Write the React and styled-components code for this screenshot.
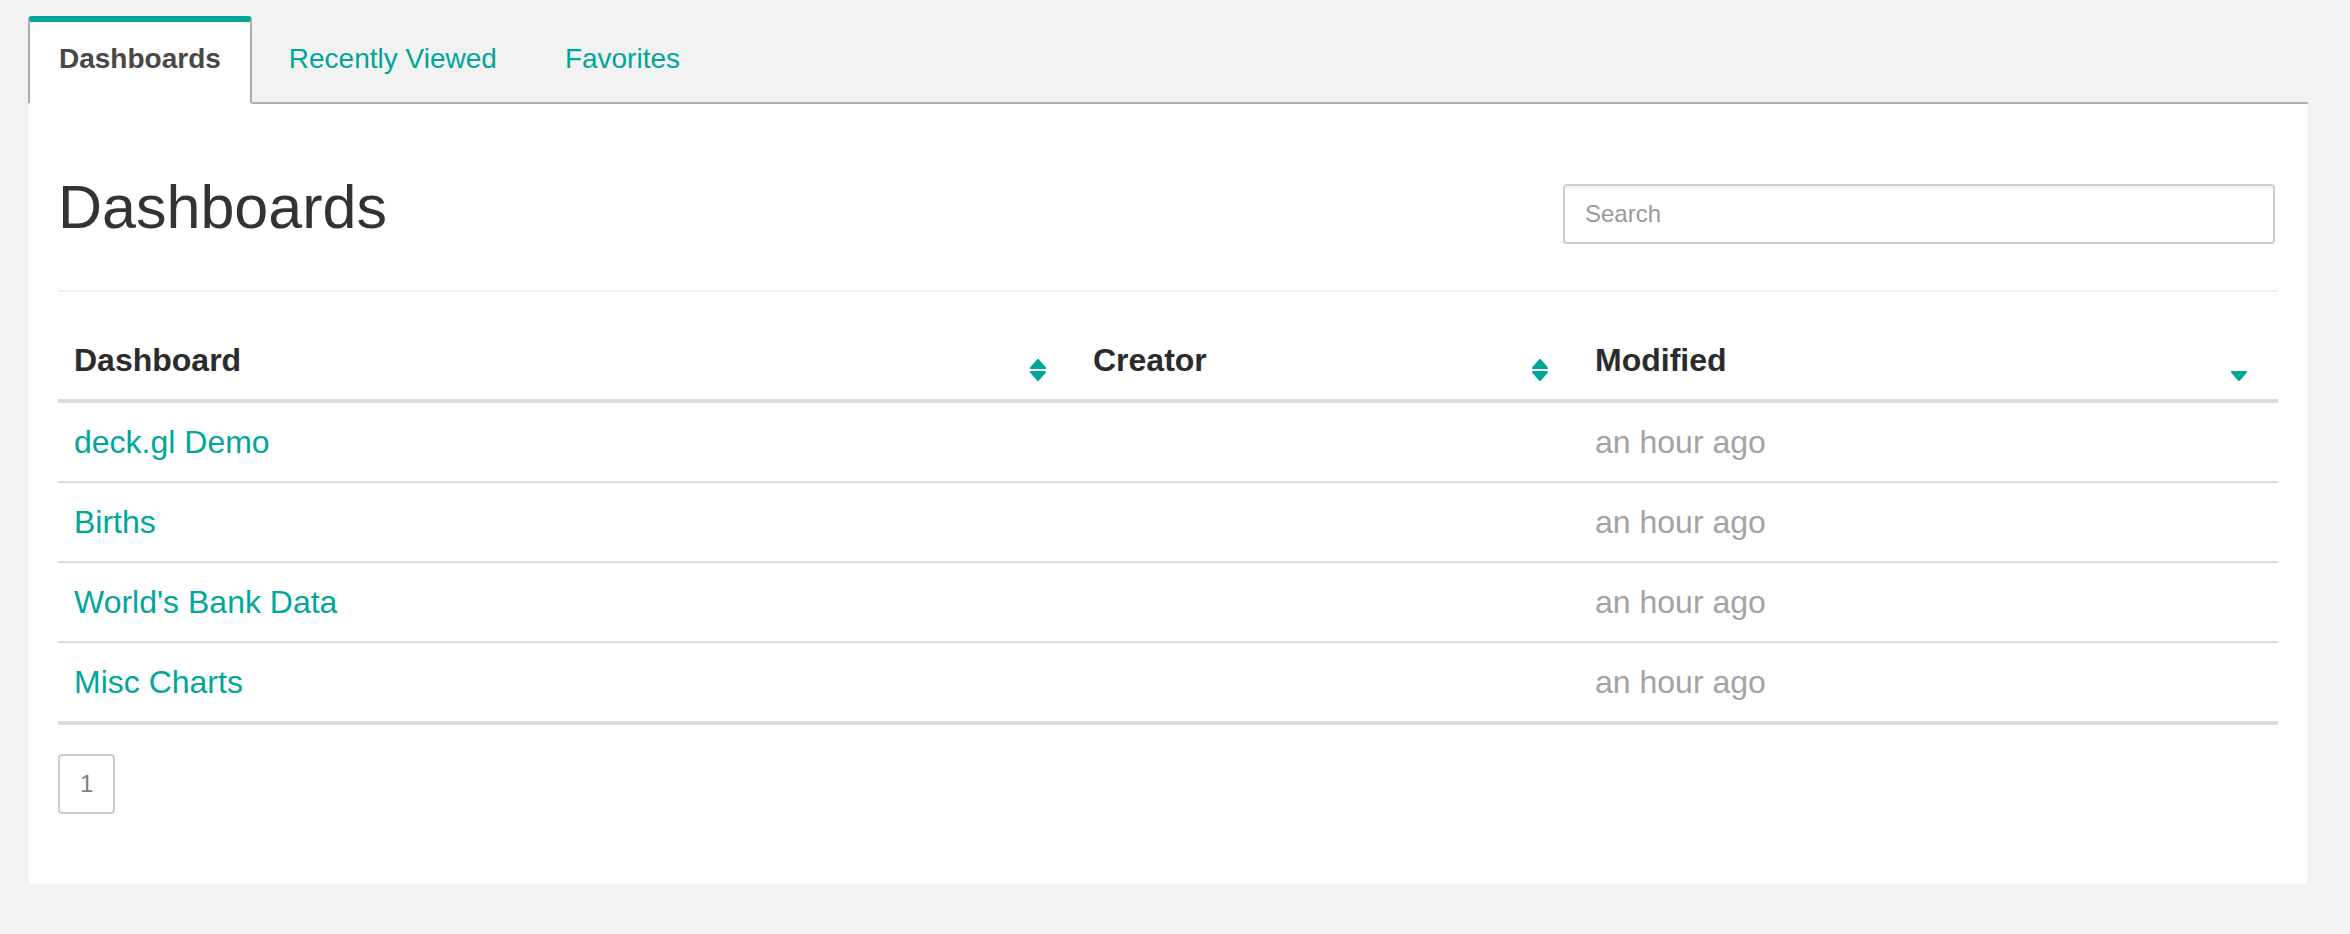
import React from 'react';
import styled, { createGlobalStyle } from 'styled-components';

const GlobalStyle = createGlobalStyle`
    html, body {
        margin: 0;
        padding: 0;
        background: #f2f2f2;
        font-family: "Liberation Sans", Arial, sans-serif;
        color: #333;
    }
`;

const Page = styled.div`
    padding: 16px 42px 0 28px;
`;

const TabList = styled.ul`
    display: flex;
    list-style: none;
    margin: 0;
    padding: 0;
    border-bottom: 2px solid #b0b0b0;
`;

const Tab = styled.li`
    margin: 0 6px -2px 0;
    padding: 17px 29px 23px;
    line-height: 40px;
    font-size: 28px;
    font-weight: ${(p) => (p.active ? 'bold' : 'normal')};
    color: ${(p) => (p.active ? '#484848' : '#00a699')};
    background: ${(p) => (p.active ? '#fff' : 'transparent')};
    border: 2px solid ${(p) => (p.active ? '#aaa' : 'transparent')};
    border-top: 6px solid ${(p) => (p.active ? '#00a699' : 'transparent')};
    border-bottom-color: ${(p) => (p.active ? '#fff' : 'transparent')};
    border-radius: 4px 4px 0 0;
    cursor: pointer;
`;

const Panel = styled.div`
    background: #fff;
    padding: 30px;
    border-radius: 0 0 4px 4px;
    box-shadow: 0 1px 3px rgba(0, 0, 0, 0.08);
`;

const HeaderRow = styled.div`
    display: flex;
    justify-content: space-between;
    align-items: flex-start;
    margin-top: 40px;
`;

const Title = styled.h1`
    margin: 0;
    font-size: 61px;
    line-height: 67px;
    font-weight: 300;
    color: #333;
`;

const SearchInput = styled.input`
    box-sizing: border-box;
    width: 712px;
    height: 60px;
    margin: 10px 3px 0 0;
    padding: 0 20px;
    border: 2px solid #ccc;
    border-radius: 4px;
    font-family: inherit;
    font-size: 24px;
    color: #555;
    box-shadow: inset 0 2px 2px rgba(0, 0, 0, 0.06);
    &::placeholder {
        color: #999;
    }
`;

const Divider = styled.hr`
    margin: 46px 0 0;
    border: 0;
    border-top: 2px solid #eee;
`;

const Table = styled.table`
    width: 100%;
    margin-top: 29px;
    border-collapse: collapse;
    table-layout: fixed;
    font-size: 32px;
    line-height: 46px;
`;

const HeadCell = styled.th`
    padding: 16px;
    text-align: left;
    font-weight: bold;
    color: #2b2b2b;
    border-bottom: 4px solid #ddd;
`;

const HeadInner = styled.div`
    display: flex;
    justify-content: space-between;
    align-items: flex-end;
`;

const SortIcon = styled.svg`
    flex: none;
    width: 16px;
    height: 22px;
    margin: 0 15px 2px 0;
    fill: #00a699;
    stroke: #00a699;
    stroke-width: 2;
    stroke-linejoin: round;
`;

const Row = styled.tr`
    &:last-child td {
        border-bottom-width: 4px;
    }
`;

const Cell = styled.td`
    padding: 16px;
    border-bottom: 2px solid #ddd;
    color: ${(p) => (p.muted ? '#a3a3a3' : '#333')};
    white-space: nowrap;
`;

const Link = styled.a`
    color: #00a699;
    text-decoration: none;
`;

const Pagination = styled.ul`
    display: flex;
    list-style: none;
    margin: 29px 0 40px;
    padding: 0;
`;

const PageButton = styled.li`
    padding: 10px 20px;
    line-height: 36px;
    font-size: 24px;
    color: #808080;
    border: 2px solid #ccc;
    border-radius: 4px;
`;

const Sort = ({ dir }) => (
    <SortIcon viewBox="0 0 16 22">
        {dir !== 'desc' && <polygon points="8,1 15,9 1,9" />}
        {dir !== 'asc' && <polygon points="1,13 15,13 8,21" />}
    </SortIcon>
);

const columns = [
    { label: 'Dashboard', width: '1019px', sort: 'both' },
    { label: 'Creator', width: '502px', sort: 'both' },
    { label: 'Modified', width: '699px', sort: 'desc' },
];

const dashboards = [
    { name: 'deck.gl Demo', modified: 'an hour ago' },
    { name: 'Births', modified: 'an hour ago' },
    { name: "World's Bank Data", modified: 'an hour ago' },
    { name: 'Misc Charts', modified: 'an hour ago' },
];

const App = () => {
    return (
        <Page>
            <GlobalStyle />
            <TabList>
                <Tab active>Dashboards</Tab>
                <Tab>Recently Viewed</Tab>
                <Tab>Favorites</Tab>
            </TabList>
            <Panel>
                <HeaderRow>
                    <Title>Dashboards</Title>
                    <SearchInput placeholder="Search" />
                </HeaderRow>
                <Divider />
                <Table>
                    <colgroup>
                        {columns.map((c) => (
                            <col key={c.label} style={{ width: c.width }} />
                        ))}
                    </colgroup>
                    <thead>
                        <tr>
                            {columns.map((c) => (
                                <HeadCell key={c.label}>
                                    <HeadInner>
                                        <span>{c.label}</span>
                                        <Sort dir={c.sort} />
                                    </HeadInner>
                                </HeadCell>
                            ))}
                        </tr>
                    </thead>
                    <tbody>
                        {dashboards.map((d) => (
                            <Row key={d.name}>
                                <Cell>
                                    <Link href="#">{d.name}</Link>
                                </Cell>
                                <Cell />
                                <Cell muted>{d.modified}</Cell>
                            </Row>
                        ))}
                    </tbody>
                </Table>
                <Pagination>
                    <PageButton>1</PageButton>
                </Pagination>
            </Panel>
        </Page>
    );
};

export default App;
